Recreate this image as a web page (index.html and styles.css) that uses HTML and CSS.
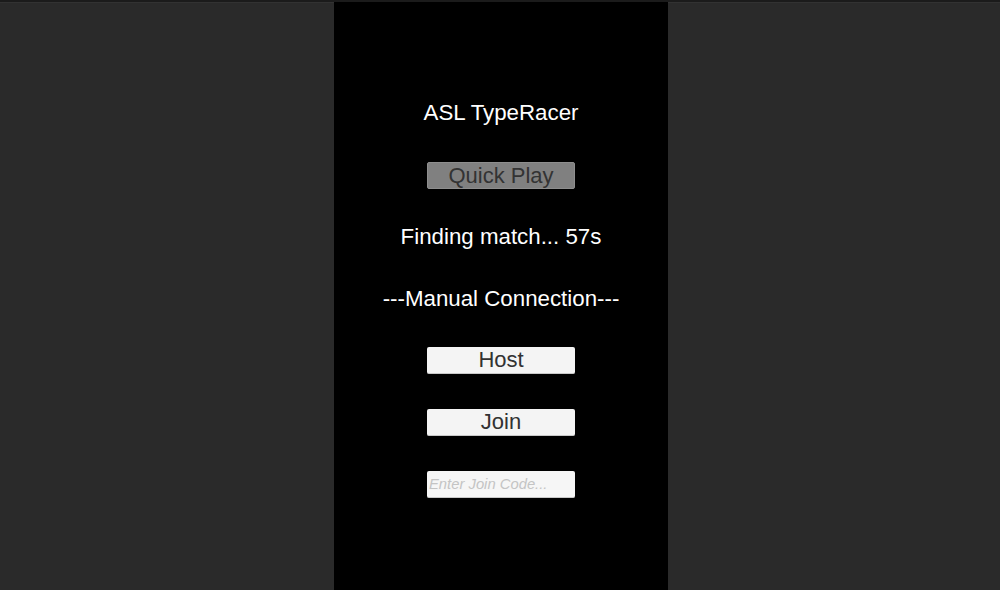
FILE: index.html
```html
<!DOCTYPE html>
<html>
<head>
<meta charset="utf-8">
<link rel="stylesheet" href="styles.css">
</head>
<body>
<div class="topbar"></div>
<div class="stage">
  <div class="side side-left"></div>
  <main class="panel">
    <div class="row"><span class="label">ASL TypeRacer</span></div>
    <div class="row"><button class="btn btn-disabled">Quick Play</button></div>
    <div class="row"><span class="label">Finding match... 57s</span></div>
    <div class="row"><span class="label">---Manual Connection---</span></div>
    <div class="row"><button class="btn">Host</button></div>
    <div class="row"><button class="btn">Join</button></div>
    <div class="row"><input class="field" type="text" placeholder="Enter Join Code..."></div>
  </main>
  <div class="side"></div>
</div>
</body>
</html>
```
FILE: styles.css
```css
html, body {
  margin: 0;
  padding: 0;
  width: 1000px;
  height: 590px;
  overflow: hidden;
  background: #2a2a2a;
  font-family: "Liberation Sans", Arial, sans-serif;
}
.topbar {
  height: 2px;
  background: #1b1b1b;
}
.stage {
  display: flex;
  height: 588px;
}
.side {
  flex: 1;
  background: #2a2a2a;
  border-top: 1px solid #323232;
}
.side-left {
  flex: 0 0 334px;
}
.panel {
  width: 334px;
  background: #000;
  padding-top: 80.5px;
  box-sizing: border-box;
  display: flex;
  flex-direction: column;
}
.row {
  height: 61.8px;
  display: flex;
  align-items: center;
  justify-content: center;
}
.label {
  color: #fff;
  font-size: 22.3px;
  line-height: 26px;
}
.btn {
  width: 148px;
  height: 27px;
  box-sizing: border-box;
  margin: 0;
  padding: 0;
  border: none;
  border-radius: 2px;
  background: #f4f4f4;
  border-bottom: 1px solid #c8c8c8;
  color: #323232;
  font-family: "Liberation Sans", Arial, sans-serif;
  font-size: 22px;
  line-height: 26px;
}
.btn-disabled {
  background: #808080;
  border: 1px solid #8e8e8e;
  color: #333;
}
.field {
  width: 148px;
  height: 27px;
  box-sizing: border-box;
  margin: 0;
  padding: 0 2px;
  border: none;
  border-radius: 2px;
  border-bottom: 1px solid #c8c8c8;
  background: #f6f6f6;
  font-family: "Liberation Sans", Arial, sans-serif;
  font-size: 14.8px;
  font-style: italic;
  outline: none;
}
.field::placeholder {
  color: #c4c4c4;
  font-style: italic;
}
```
